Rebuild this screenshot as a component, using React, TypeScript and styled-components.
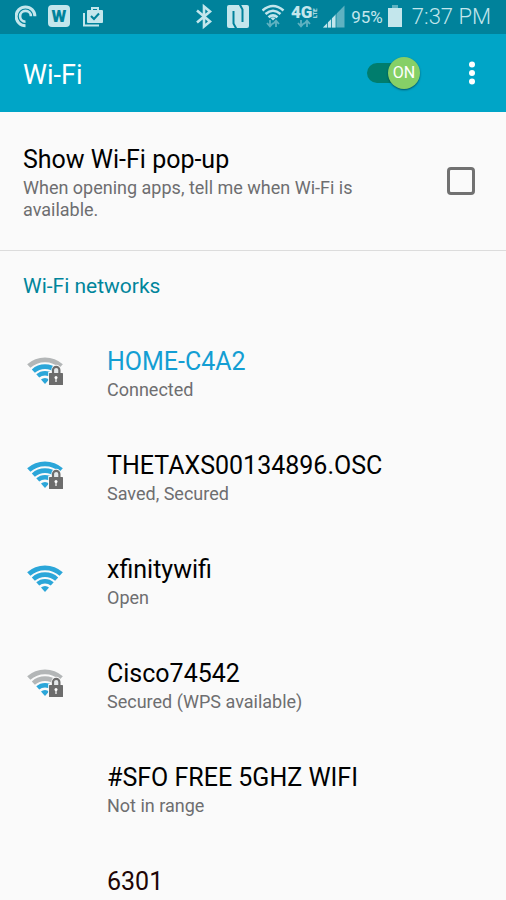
import React from "react";
import styled, { createGlobalStyle } from "styled-components";

const GlobalStyle = createGlobalStyle`
  *, *::before, *::after { box-sizing: border-box; }
  html, body, #root { height: 100%; }
  body {
    margin: 0;
    background: #fafafa;
    color: #000;
    font-family: Roboto, "Noto Sans", sans-serif;
  }
`;

const Screen = styled.div`
  display: flex;
  flex-direction: column;
  height: 100vh;
  overflow: hidden;
`;

const StatusBar = styled.div`
  flex: none;
  display: flex;
  justify-content: space-between;
  height: 34px;
  padding: 0 15px;
  background: #00829b;
  color: #c3e6ec;
  white-space: nowrap;
`;

const StatusGroup = styled.div<{ $gap: number }>`
  display: flex;
  align-items: center;
  gap: ${(p) => p.$gap}px;
`;

const StatusIcon = styled.svg`
  display: block;
  flex: none;
  height: 34px;
`;

const Battery = styled.span`
  font-size: 17px;
  line-height: 34px;
`;

const Clock = styled.time`
  font-size: 22px;
  line-height: 36px;
  font-weight: 300;
`;

const AppBar = styled.header`
  flex: none;
  display: flex;
  align-items: center;
  height: 78px;
  padding: 0 15px 0 23px;
  background: #00a5c7;
  color: #fff;
`;

const Title = styled.h1`
  flex: 1;
  margin: 0;
  padding-top: 4px;
  font-size: 27px;
  font-weight: 400;
  line-height: 32px;
`;

const Switch = styled.label`
  position: relative;
  display: flex;
  align-items: center;
  justify-content: flex-end;
  width: 53px;
  height: 32px;
  margin-right: 33px;
  cursor: pointer;

  &::before {
    content: "";
    position: absolute;
    inset: 6px 16px 6px 0;
    border-radius: 10px;
    background: #007d6d;
  }
`;

const SwitchInput = styled.input`
  position: absolute;
  inset: 0;
  margin: 0;
  opacity: 0;
`;

const Knob = styled.span`
  position: relative;
  width: 32px;
  height: 32px;
  border-radius: 50%;
  background: #86d067;
  box-shadow: 0 1px 2px rgba(0, 50, 60, 0.7);
  font-size: 16px;
  line-height: 32px;
  text-align: center;
`;

const MenuButton = styled.button`
  display: grid;
  place-items: center;
  width: 38px;
  height: 48px;
  padding: 0;
  border: 0;
  background: none;
  color: inherit;
`;

const PopupRow = styled.label`
  flex: none;
  display: flex;
  align-items: center;
  justify-content: space-between;
  gap: 24px;
  min-height: 139px;
  padding: 0 31px 0 23px;
  border-bottom: 1px solid #dcdcdc;
`;

const PopupText = styled.span`
  display: flex;
  flex-direction: column;
  flex: 0 1 360px;
  padding-top: 2px;
`;

const Primary = styled.span<{ $color?: string }>`
  color: ${(p) => p.$color ?? "#000"};
  font-size: 25px;
  line-height: 34px;
`;

const Secondary = styled.span`
  color: #6e6e70;
  font-size: 18px;
  line-height: 22px;
`;

const Checkbox = styled.input`
  appearance: none;
  flex: none;
  width: 28px;
  height: 28px;
  margin: 0;
  border: 3px solid #717171;
  border-radius: 4px;
`;

const Networks = styled.section`
  flex: 1;
  min-height: 0;
  overflow-y: auto;
  scrollbar-width: none;
`;

const SectionTitle = styled.h2`
  margin: 0;
  padding: 22px 23px;
  color: #00859b;
  font-size: 21px;
  font-weight: 400;
  line-height: 26px;
`;

const NetworkList = styled.ul`
  margin: 0;
  padding: 0;
  list-style: none;
`;

const NetworkButton = styled.button`
  display: grid;
  grid-template-columns: 36px 1fr;
  column-gap: 44px;
  align-items: center;
  width: 100%;
  min-height: 104px;
  padding: 0 23px 0 27px;
  border: 0;
  background: none;
  font: inherit;
  text-align: left;
`;

const NetworkText = styled.span`
  grid-column: 2;
  display: flex;
  flex-direction: column;
`;

const NetworkIcon = styled.svg`
  display: block;
  margin-bottom: 4px;
`;

const BLUE = "#2ba6d9";
const GREY = "#b3b6b7";

function sweep(r: number, cx: number, cy: number) {
  const dx = r * Math.sin(0.735);
  const dy = r * Math.cos(0.735);
  return `M${cx - dx} ${cy - dy}A${r} ${r} 0 0 1 ${cx + dx} ${cy - dy}`;
}

function SignalIcon({ level, locked }: { level: number; locked: boolean }) {
  const bands = [
    { r: 10.8, w: 4.4 },
    { r: 17.4, w: 4.6 },
    { r: 24.2, w: 4.8 },
  ];
  return (
    <NetworkIcon width="36" height="30" viewBox="0 0 36 30" aria-hidden="true">
      <path d={`${sweep(6, 18, 28)}L18 28Z`} fill={BLUE} />
      {bands.map((b, i) => (
        <path
          key={b.r}
          d={sweep(b.r, 18, 28)}
          fill="none"
          stroke={i + 2 <= level ? BLUE : GREY}
          strokeWidth={b.w}
        />
      ))}
      {locked && (
        <g>
          <path d="M24.4 17v-3.4a4.8 4.8 0 0 1 9.6 0V17Z" fill="#fafafa" />
          <path d="M21.2 16h15v14h-15z" fill="#fafafa" />
          <path d="M26 18v-4a3.2 3.2 0 0 1 6.4 0V18" fill="#e4e8ea" stroke="#6c6c6c" strokeWidth="2.2" />
          <rect x="22" y="17" width="14" height="12" rx="0.6" fill="#6c6c6c" />
          <circle cx="29" cy="21.5" r="1.5" fill="#fff" />
          <path d="M28.4 22h1.2v4h-1.2z" fill="#fff" />
        </g>
      )}
    </NetworkIcon>
  );
}

type Network = {
  name: string;
  status?: string;
  level?: number;
  locked?: boolean;
  color?: string;
};

const networks: Network[] = [
  { name: "HOME-C4A2", status: "Connected", level: 3, locked: true, color: "#139ed3" },
  { name: "THETAXS00134896.OSC", status: "Saved, Secured", level: 4, locked: true },
  { name: "xfinitywifi", status: "Open", level: 4 },
  { name: "Cisco74542", status: "Secured (WPS available)", level: 2, locked: true },
  { name: "#SFO FREE 5GHZ WIFI", status: "Not in range" },
  { name: "6301", color: "#210505" },
];

const DIM = "#5fb2c1";

function DataArrows({ x }: { x: number }) {
  return (
    <g fill="none" stroke={DIM} strokeWidth="1.8">
      <path d={`M${x - 3} 20v6M${x - 6} 23l3 3.4 3-3.4`} />
      <path d={`M${x + 3} 27v-6M${x} 24l3-3.4 3 3.4`} />
    </g>
  );
}

function StatusIcons() {
  return (
    <StatusBar>
      <StatusGroup $gap={11}>
        <StatusIcon width="22" viewBox="15 0 22 34" fill="none" stroke="currentColor">
          <path d="M25.5 25.7A9.4 9.4 0 1 1 34.9 16.3" strokeWidth="3" />
          <path d="M25.5 21.7A5.4 5.4 0 1 1 30.9 16.3" strokeWidth="2.6" />
        </StatusIcon>
        <StatusIcon width="22" viewBox="48 0 22 34">
          <rect x="48" y="5" width="22" height="22" rx="4" fill="currentColor" />
          <text x="59" y="22" textAnchor="middle" fontFamily="Roboto" fontSize="17" fontWeight="900" fill="#00829b">
            W
          </text>
        </StatusIcon>
        <StatusIcon width="22" viewBox="81 0 22 34">
          <path d="M84 13v12.5h15" fill="none" stroke="currentColor" strokeWidth="2" />
          <path d="M92 10V8h6v2" fill="none" stroke="currentColor" strokeWidth="2" />
          <rect x="87" y="10" width="16" height="13" rx="1" fill="currentColor" />
          <path d="M91 16l3 3 5-5.5" fill="none" stroke="#00829b" strokeWidth="2" />
        </StatusIcon>
      </StatusGroup>
      <StatusGroup $gap={5}>
        <StatusIcon width="28" viewBox="195 0 28 34">
          <path
            d="M198 10.5L211 21.5L205 26.5V6.5L211 11.5L198 22.5"
            fill="none"
            stroke="currentColor"
            strokeWidth="2.6"
          />
        </StatusIcon>
        <StatusIcon width="30" viewBox="228 0 30 34">
          <rect x="228" y="5" width="22" height="23" rx="2" fill="currentColor" />
          <path d="M237.5 29L234.500 23.500V11" fill="none" stroke="#00829b" strokeWidth="2" />
          <path d="M240.500 4L243.500 9.500V22" fill="none" stroke="#00829b" strokeWidth="2" />
        </StatusIcon>
        <StatusIcon width="24" viewBox="263 0 24 34">
          <g fill="none" stroke="currentColor" strokeWidth="2.6">
            <path d="M263.5 10.5Q274 1.5 284.5 10.5" />
            <path d="M266.5 14Q274 7.5 281.5 14" />
            <path d="M269.5 17.3Q274 13.5 278.5 17.3" />
          </g>
          <path d="M271.5 18Q274 16.5 276.5 18L274 20.5Z" fill="currentColor" />
          <DataArrows x={274} />
        </StatusIcon>
        <StatusIcon width="27" viewBox="291 0 27 34">
          <text x="291" y="18" fontFamily="Roboto" fontSize="17" fontWeight="900" fill="currentColor">
            4G
          </text>
          <text
            x="317"
            y="18"
            transform="rotate(-90 317 18)"
            fontFamily="Roboto"
            fontSize="6"
            fontWeight="700"
            fill="currentColor"
          >
            LTE
          </text>
          <DataArrows x={304} />
        </StatusIcon>
        <StatusIcon width="23" viewBox="322 0 23 34">
          <path d="M322 27.5L343.5 5.5V27.5Z" fill={DIM} />
          <path d="M322 27.5L335 14.2V27.5Z" fill="currentColor" />
          <path d="M326.5 20v8M330.5 16v12M335 12v16" stroke="#00829b" strokeWidth="0.8" />
        </StatusIcon>
        <Battery>95%</Battery>
        <StatusIcon width="19" viewBox="388 0 19 34">
          <rect x="392" y="5" width="6" height="4" fill={DIM} />
          <rect x="388" y="8" width="14" height="19" fill="currentColor" />
        </StatusIcon>
        <Clock>7:37 PM</Clock>
      </StatusGroup>
    </StatusBar>
  );
}

export default function App() {
  return (
    <Screen>
      <GlobalStyle />
      <StatusIcons />
      <AppBar>
        <Title>Wi-Fi</Title>
        <Switch>
          <SwitchInput type="checkbox" role="switch" aria-label="Wi-Fi" defaultChecked />
          <Knob>ON</Knob>
        </Switch>
        <MenuButton type="button" aria-label="More options">
          <svg width="8" height="24" viewBox="0 0 8 24" fill="currentColor">
            <circle cx="4" cy="3.5" r="3" />
            <circle cx="4" cy="12" r="3" />
            <circle cx="4" cy="20.5" r="3" />
          </svg>
        </MenuButton>
      </AppBar>
      <PopupRow>
        <PopupText>
          <Primary>Show Wi-Fi pop-up</Primary>
          <Secondary>When opening apps, tell me when Wi-Fi is available.</Secondary>
        </PopupText>
        <Checkbox type="checkbox" />
      </PopupRow>
      <Networks>
        <SectionTitle>Wi-Fi networks</SectionTitle>
        <NetworkList>
          {networks.map((n) => (
            <li key={n.name}>
              <NetworkButton type="button">
                {n.level !== undefined && <SignalIcon level={n.level} locked={!!n.locked} />}
                <NetworkText>
                  <Primary $color={n.color}>{n.name}</Primary>
                  <Secondary>{n.status ?? "\u00a0"}</Secondary>
                </NetworkText>
              </NetworkButton>
            </li>
          ))}
        </NetworkList>
      </Networks>
    </Screen>
  );
}
